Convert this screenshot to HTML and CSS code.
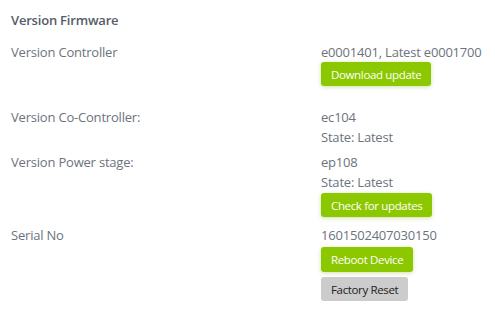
FILE: index.html
```html
<!DOCTYPE html>
<html lang="en">
<head>
  <meta charset="UTF-8" />
  <meta name="viewport" content="width=device-width, initial-scale=1.0" />
  <title>Version Firmware</title>
  <link rel="stylesheet" href="styles.css">
</head>
<body>
  <!-- ===== Firmware info panel ===== -->
  <section class="firmware">
    <h3 class="firmware-title">Version Firmware</h3>

    <div class="info-row">
      <div class="info-label">Version Controller</div>
      <div class="info-value">
        <div>e0001401, Latest e0001700</div>
        <button class="btn btn-green">Download update</button>
      </div>
    </div>

    <div class="info-row row-co">
      <div class="info-label">Version Co-Controller:</div>
      <div class="info-value">
        <div>ec104</div>
        <div>State: Latest</div>
      </div>
    </div>

    <div class="info-row row-power">
      <div class="info-label">Version Power stage:</div>
      <div class="info-value">
        <div>ep108</div>
        <div>State: Latest</div>
        <button class="btn btn-green">Check for updates</button>
      </div>
    </div>

    <div class="info-row row-serial">
      <div class="info-label">Serial No</div>
      <div class="info-value">
        <div>1601502407030150</div>
        <button class="btn btn-green">Reboot Device</button>
        <button class="btn btn-grey">Factory Reset</button>
      </div>
    </div>
  </section>
</body>
</html>
```

FILE: styles.css
```css
* {
  box-sizing: border-box;
}

html, body {
  margin: 0;
  padding: 0;
  background-color: #ffffff;
  font-family: 'Open Sans', 'Noto Sans', sans-serif;
  font-size: 13px;
  letter-spacing: -0.2px;
  color: #6c737d;
}

/* ===== panel ===== */
.firmware {
  padding: 10px 11px;
}

.firmware-title {
  margin: 0 0 12px;
  font-size: 13px;
  font-weight: 600;
  line-height: 20px;
  color: #555c68;
}

/* label column + value column */
.info-row {
  display: grid;
  grid-template-columns: 310px 1fr;
  line-height: 20px;
}

.row-co { margin-top: 21px; }
.row-power { margin-top: 5px; }
.row-serial { margin-top: 8px; }

.info-value {
  display: flex;
  flex-direction: column;
  align-items: flex-start;
  white-space: nowrap;
}

/* ===== buttons ===== */
.btn {
  border: none;
  border-radius: 3px;
  height: 24px;
  padding: 0 10px;
  font-family: inherit;
  font-size: 11.5px;
  letter-spacing: -0.35px;
  cursor: pointer;
}

.btn-green {
  background-color: #8cc800;
  color: #ffffff;
  box-shadow: 0 1px 4px rgba(120, 170, 0, 0.35);
}

.btn-grey {
  margin-top: 5px;
  background-color: #cccccc;
  color: #222222;
}

.row-power .btn-green {
  margin-top: 1px;
}

.row-serial .btn-green {
  margin-top: 2px;
  height: 25px;
}
```
